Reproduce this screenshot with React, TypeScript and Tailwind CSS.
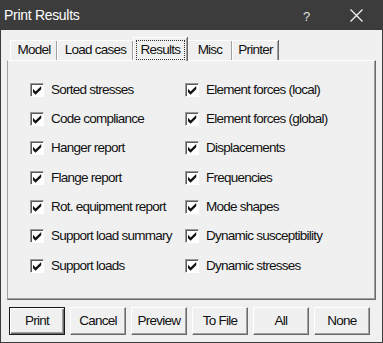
import React from 'react';

const LEFT = [
  'Sorted stresses',
  'Code compliance',
  'Hanger report',
  'Flange report',
  'Rot. equipment report',
  'Support load summary',
  'Support loads',
];

const RIGHT = [
  'Element forces (local)',
  'Element forces (global)',
  'Displacements',
  'Frequencies',
  'Mode shapes',
  'Dynamic susceptibility',
  'Dynamic stresses',
];

const TABS = [
  { label: 'Model', w: 'w-[47px]' },
  { label: 'Load cases', w: 'w-[76px]' },
  { label: 'Results', w: 'w-[54px]', active: true },
  { label: 'Misc', w: 'w-[45px]' },
  { label: 'Printer', w: 'w-[46px]' },
];

const BUTTONS = ['Print', 'Cancel', 'Preview', 'To File', 'All', 'None'];

function Check({ label }: { label: string }) {
  return (
    <div className="flex h-[29.33px] items-center">
      <span className="flex h-[14px] w-[14px] items-center justify-center border-t border-l border-t-[#9a9a9a] border-l-[#9a9a9a] border-r border-b border-r-white border-b-white bg-white shadow-[inset_1px_1px_0_#5a5a5a]">
        <svg width="9" height="9" viewBox="0 0 7 7" className="ml-[1px] mt-[1px]">
          <polygon points="0,2.2 2,4.2 6.4,0 6.4,2.6 2,6.9 0,4.9" fill="#111" />
        </svg>
      </span>
      <span className="ml-[7px] whitespace-nowrap">{label}</span>
    </div>
  );
}

export default function App() {
  return (
    <div
      className="flex h-[343px] w-[383px] flex-col bg-[#3c3c3c] px-px pb-px text-[13.5px] tracking-[-0.75px] text-[#111]"
      style={{ fontFamily: '"Liberation Sans", Arial, sans-serif' }}
    >
      {/* title bar */}
      <div className="relative flex h-[30px] shrink-0 items-center pl-[3px] text-[14px] tracking-[-0.3px] text-white">
        Print Results
        <span className="absolute left-[302px] top-[7px] text-[13px] font-light text-[#e0e0e0]">?</span>
        <svg width="13" height="13" viewBox="0 0 13 13" className="absolute left-[349px] top-[9px]">
          <path d="M0.5 0.5 L12.5 12.5 M12.5 0.5 L0.5 12.5" stroke="#f2f2f2" strokeWidth="1.3" />
        </svg>
      </div>

      <div className="flex flex-1 flex-col bg-[#f0f0f0]">
        {/* tabs */}
        <div className="flex h-[30px] items-end pl-[9px] pt-[7px]">
          {TABS.map((t) =>
            t.active ? (
              <div
                key={t.label}
                className={`relative z-10 -mb-px flex h-[24px] ${t.w} items-start justify-center border-t border-l border-white bg-[#f0f0f0] pt-[2px] shadow-[inset_-1px_0_0_#a0a0a0,1px_0_0_#696969]`}
              >
                <span className="flex h-[20px] w-[49px] items-center justify-center border border-dotted border-[#333]">
                  {t.label}
                </span>
              </div>
            ) : (
              <div
                key={t.label}
                className={`flex h-[20px] ${t.w} items-center justify-center border-t border-l border-white shadow-[inset_-1px_0_0_#a0a0a0,1px_0_0_#696969]`}
              >
                {t.label}
              </div>
            )
          )}
        </div>

        {/* panel */}
        <div className="ml-[6px] flex h-[240px] w-[369px] border-t border-l border-t-white border-l-[#a0a0a0] border-r border-b border-r-[#696969] border-b-[#696969] pt-[14px] shadow-[inset_-1px_-1px_0_#a0a0a0]">
          <div className="ml-[22px] w-[155px]">
            {LEFT.map((l) => (
              <Check key={l} label={l} />
            ))}
          </div>
          <div>
            {RIGHT.map((l) => (
              <Check key={l} label={l} />
            ))}
          </div>
        </div>

        {/* buttons */}
        <div className="mt-[7px] flex gap-[5px] pl-[8px]">
          {BUTTONS.map((b, i) => (
            <button
              key={b}
              className={`flex h-[28px] w-[56px] items-center justify-center bg-[#f0f0f0] ${
                i === 0
                  ? 'border border-[#1a1a1a] shadow-[inset_1px_1px_0_#fff,inset_-1px_-1px_0_#696969,inset_-2px_-2px_0_#a0a0a0]'
                  : 'border-t border-l border-t-white border-l-white border-r border-b border-r-[#696969] border-b-[#696969] shadow-[inset_-1px_-1px_0_#a0a0a0]'
              }`}
            >
              {b}
            </button>
          ))}
        </div>
      </div>
    </div>
  );
}
